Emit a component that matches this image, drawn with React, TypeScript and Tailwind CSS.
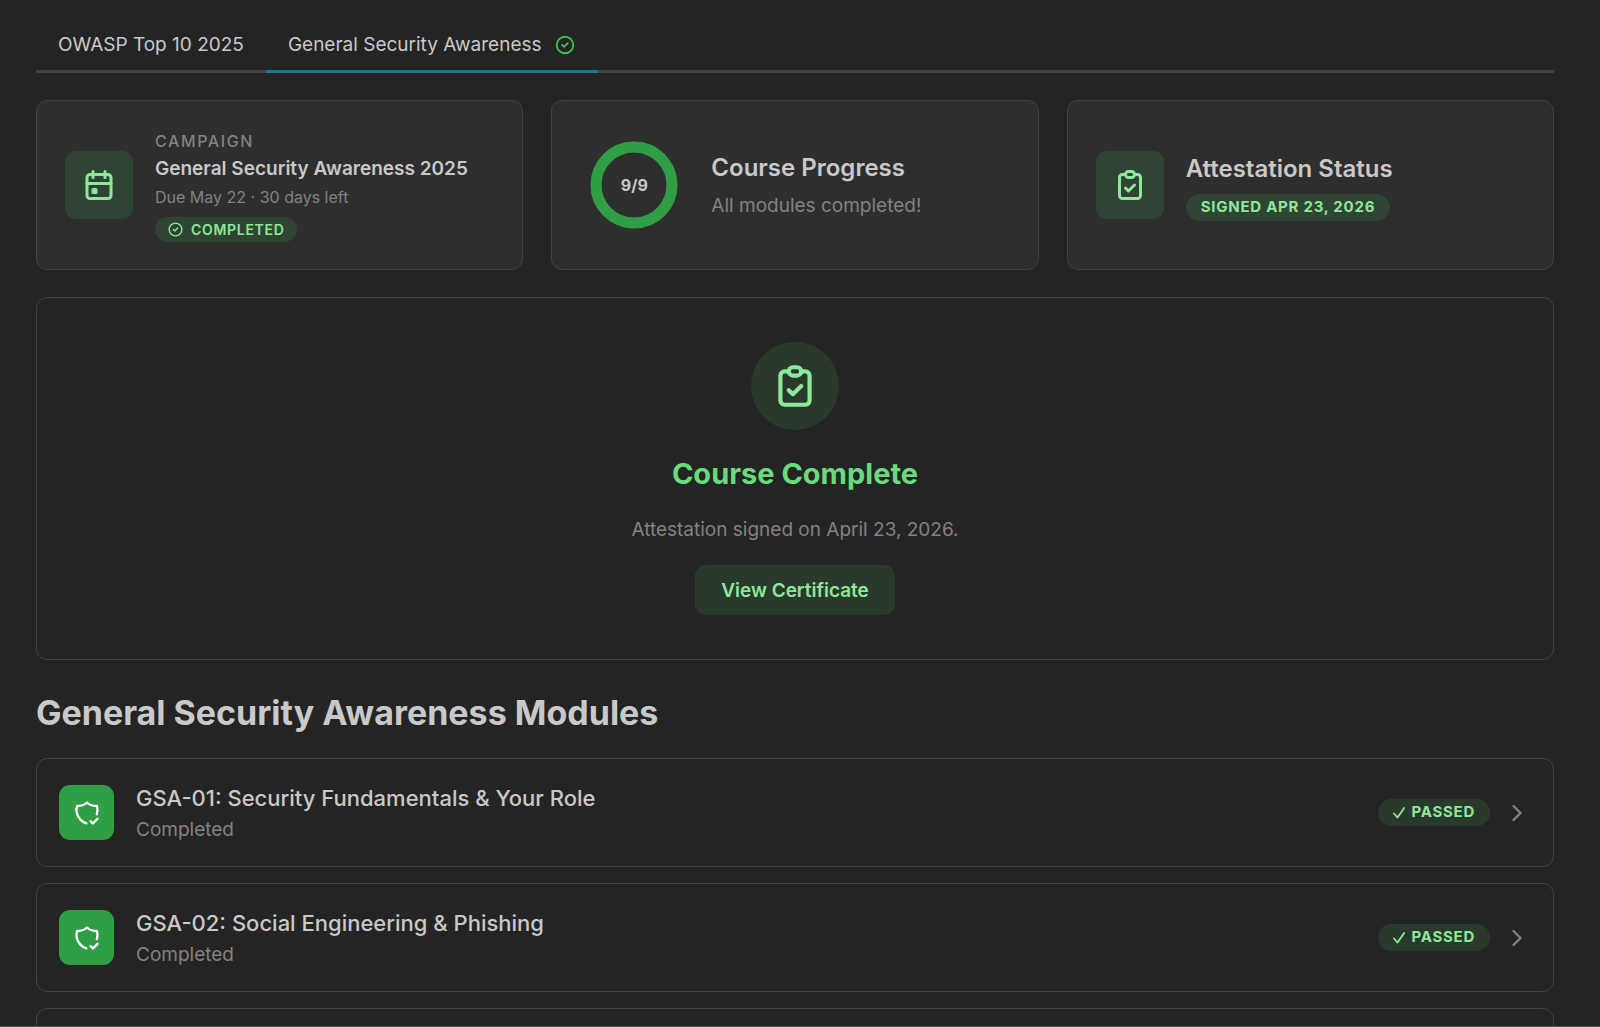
import {
  TbCalendarEvent,
  TbChevronRight,
  TbCircleCheck,
  TbClipboardCheck,
  TbShieldCheck,
} from "react-icons/tb";

const modules = [
  { code: "GSA-01", title: "Security Fundamentals & Your Role" },
  { code: "GSA-02", title: "Social Engineering & Phishing" },
];

function ProgressRing({ done, total }: { done: number; total: number }) {
  const radius = 38;
  const length = 2 * Math.PI * radius;

  return (
    <div className="grid size-[88px] shrink-0 place-items-center">
      <svg viewBox="0 0 88 88" className="col-start-1 row-start-1 size-full -rotate-90">
        <circle cx="44" cy="44" r={radius} fill="none" stroke="#424242" strokeWidth="11" />
        <circle
          cx="44"
          cy="44"
          r={radius}
          fill="none"
          stroke="#2f9e44"
          strokeWidth="11"
          strokeDasharray={`${(length * done) / total} ${length}`}
        />
      </svg>
      <span className="col-start-1 row-start-1 text-base font-bold">
        {done}/{total}
      </span>
    </div>
  );
}

function Card({ children }: { children: React.ReactNode }) {
  return (
    <section className="flex min-h-[170px] items-center gap-[22px] rounded-[11px] border border-[#424242] bg-[#2e2e2e] px-7">
      {children}
    </section>
  );
}

export default function App() {
  return (
    <main className="h-screen overflow-hidden border-b border-[#555555] bg-[#242424] px-9 pt-5 pr-[46px] font-['Inter',sans-serif] text-[#c9c9c9]">
      {/* Tabs */}
      <div role="tablist" className="flex border-b-3 border-[#424242] text-[19px] leading-[30px]">
        <button role="tab" aria-selected="false" className="-mb-[3px] border-b-3 border-transparent px-[22px] pt-[10px] pb-[10px]">
          OWASP Top 10 2025
        </button>
        <button
          role="tab"
          aria-selected="true"
          className="-mb-[3px] flex items-center gap-3 border-b-3 border-[#0c7c91] px-[22px] pt-[10px] pb-[10px]"
        >
          General Security Awareness
          <TbCircleCheck size={22} className="text-[#40c057]" />
        </button>
      </div>

      {/* Summary cards */}
      <div className="mt-[27px] grid grid-cols-3 gap-7">
        <Card>
          <div className="grid size-[68px] shrink-0 place-items-center rounded-[11px] bg-[#2f4433] text-[#8ce99a]">
            <TbCalendarEvent size={36} />
          </div>
          <div>
            <p className="text-base leading-[26px] font-medium tracking-widest text-[#828282]">CAMPAIGN</p>
            <h2 className="text-[19px] leading-[30px] font-semibold">General Security Awareness 2025</h2>
            <p className="text-base leading-[26px] text-[#828282]">Due May 22 · 30 days left</p>
            <span className="mt-[7px] flex h-[25px] w-fit items-center gap-[7px] rounded-full bg-[#2f4433] px-3 text-[14px] font-semibold tracking-wider text-[#8ce99a]">
              <TbCircleCheck size={17} />
              COMPLETED
            </span>
          </div>
        </Card>

        <Card>
          <div className="pl-[10px] pr-[11px]">
            <ProgressRing done={9} total={9} />
          </div>
          <div>
            <h2 className="text-2xl leading-[38px] font-semibold">Course Progress</h2>
            <p className="mt-1 text-[19px] leading-[30px] text-[#828282]">All modules completed!</p>
          </div>
        </Card>

        <Card>
          <div className="grid size-[68px] shrink-0 place-items-center rounded-[11px] bg-[#2f4433] text-[#8ce99a]">
            <TbClipboardCheck size={36} />
          </div>
          <div>
            <h2 className="text-2xl leading-[38px] font-semibold">Attestation Status</h2>
            <span className="mt-[6px] flex h-[27px] w-fit items-center rounded-full bg-[#2f4433] px-[15px] text-[15px] font-bold tracking-wider text-[#8ce99a]">
              SIGNED APR 23, 2026
            </span>
          </div>
        </Card>
      </div>

      {/* Completion panel */}
      <section className="mt-[27px] flex flex-col items-center rounded-[11px] border border-[#424242] py-11">
        <div className="grid size-[88px] place-items-center rounded-full bg-[#293a2c] text-[#8ce99a]">
          <TbClipboardCheck size={50} />
        </div>
        <h2 className="mt-[22px] text-[29px] leading-[44px] font-bold text-[#69db7c]">Course Complete</h2>
        <p className="mt-[19px] text-[19px] leading-[30px] text-[#828282]">Attestation signed on April 23, 2026.</p>
        <button className="mt-5 rounded-[11px] bg-[#293a2c] px-[26px] pt-[11px] pb-[9px] text-[19px] leading-[30px] font-semibold text-[#8ce99a]">
          View Certificate
        </button>
      </section>

      {/* Modules */}
      <h1 className="mt-7 text-[34px] leading-[50px] font-bold">General Security Awareness Modules</h1>
      <ul className="mt-5 space-y-4">
        {modules.map((item) => (
          <li key={item.code}>
            <a
              href={`#${item.code}`}
              className="flex h-[109px] items-center rounded-[11px] border border-[#424242] px-[22px]"
            >
              <span className="grid size-[55px] shrink-0 place-items-center rounded-[11px] bg-[#2f9e44] text-white">
                <TbShieldCheck size={28} />
              </span>
              <span className="ml-[22px] flex-1">
                <span className="block text-[22px] leading-[34px] font-medium">
                  {item.code}: {item.title}
                </span>
                <span className="block text-[19px] leading-[30px] text-[#828282]">Completed</span>
              </span>
              <span className="flex h-[27px] items-center gap-[6px] rounded-full bg-[#293a2c] px-[15px] text-[15px] font-bold tracking-wider text-[#8ce99a]">
                <svg width="12" height="12" viewBox="0 0 12 12" fill="none" stroke="currentColor" strokeWidth="1.8">
                  <path d="M1 6.5 4.5 10.5 11.2 1" strokeLinecap="round" strokeLinejoin="round" />
                </svg>
                PASSED
              </span>
              <TbChevronRight size={28} className="ml-[13px] text-[#828282]" />
            </a>
          </li>
        ))}
        <li className="h-[109px] rounded-[11px] border border-[#424242]" />
      </ul>
    </main>
  );
}
